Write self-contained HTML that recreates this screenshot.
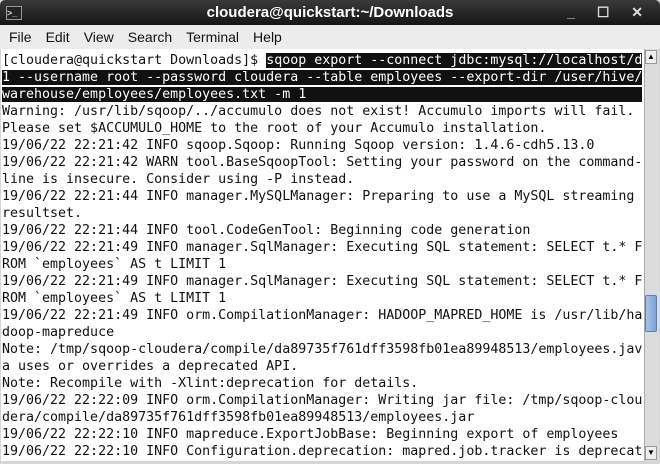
<!DOCTYPE html>
<html><head><style>
body{margin:0;width:660px;height:464px;overflow:hidden;background:#d6d6d6;font-family:"Liberation Sans",sans-serif}
.title{position:absolute;left:0;top:0;width:660px;height:25px;background:linear-gradient(#3a3a3a,#151515);color:#fff;font-weight:bold;font-size:15px;text-align:center;line-height:25px;border-radius:5px 5px 0 0}
.ico{position:absolute;left:6px;top:6px;width:14px;height:12px;border:1px solid #999;background:#222;color:#ccc;font-size:9px;line-height:12px;text-align:left}
.btns{position:absolute;right:8px;top:0;color:#ddd;font-size:14px;letter-spacing:9px}
.menu{position:absolute;left:0;top:25px;width:660px;height:24px;background:#ececec;font-size:14px;line-height:24px;color:#111}
.menu span{margin-left:9px;margin-right:5px}
.term{position:absolute;left:1px;top:49px;width:643px;height:412px;background:#fff;font-family:"DejaVu Sans Mono","Liberation Mono",monospace;font-size:13.3px;line-height:17px;white-space:pre;color:#111;overflow:hidden;padding-left:1px;padding-top:3px;box-sizing:border-box}
.hl{background:#111;color:#fff}
.sb{position:absolute;left:644px;top:49px;width:14px;height:412px;background:#dcdcdc;border-left:1px solid #aaa}
.thumb{position:absolute;left:645px;top:295px;width:12px;height:37px;background:linear-gradient(90deg,#a9c3e6,#7ea2d6);border:1px solid #5b7fb6;border-radius:2px;box-sizing:border-box}
.arr{position:absolute;left:645px;width:12px;height:14px;background:#eee;border:1px solid #999;box-sizing:border-box;font-size:8px;text-align:center;line-height:12px}
</style></head><body>
<div class="title"><div class="ico">&gt;_</div>cloudera@quickstart:~/Downloads<div class="btns">_ ☐ ✕</div></div>
<div class="menu"><span>File</span><span>Edit</span><span>View</span><span>Search</span><span>Terminal</span><span>Help</span></div>
<div class="term">[cloudera@quickstart Downloads]$ <span class="hl">sqoop export --connect jdbc:mysql://localhost/d</span>
<span class="hl">1 --username root --password cloudera --table employees --export-dir /user/hive/</span>
<span class="hl">warehouse/employees/employees.txt -m 1</span><span class="hl">                                          </span>
Warning: /usr/lib/sqoop/../accumulo does not exist! Accumulo imports will fail.
Please set $ACCUMULO_HOME to the root of your Accumulo installation.
19/06/22 22:21:42 INFO sqoop.Sqoop: Running Sqoop version: 1.4.6-cdh5.13.0
19/06/22 22:21:42 WARN tool.BaseSqoopTool: Setting your password on the command-
line is insecure. Consider using -P instead.
19/06/22 22:21:44 INFO manager.MySQLManager: Preparing to use a MySQL streaming
resultset.
19/06/22 22:21:44 INFO tool.CodeGenTool: Beginning code generation
19/06/22 22:21:49 INFO manager.SqlManager: Executing SQL statement: SELECT t.* F
ROM `employees` AS t LIMIT 1
19/06/22 22:21:49 INFO manager.SqlManager: Executing SQL statement: SELECT t.* F
ROM `employees` AS t LIMIT 1
19/06/22 22:21:49 INFO orm.CompilationManager: HADOOP_MAPRED_HOME is /usr/lib/ha
doop-mapreduce
Note: /tmp/sqoop-cloudera/compile/da89735f761dff3598fb01ea89948513/employees.jav
a uses or overrides a deprecated API.
Note: Recompile with -Xlint:deprecation for details.
19/06/22 22:22:09 INFO orm.CompilationManager: Writing jar file: /tmp/sqoop-clou
dera/compile/da89735f761dff3598fb01ea89948513/employees.jar
19/06/22 22:22:10 INFO mapreduce.ExportJobBase: Beginning export of employees
19/06/22 22:22:10 INFO Configuration.deprecation: mapred.job.tracker is deprecat</div>
<div class="sb"></div>
<div class="arr" style="top:50px">▲</div>
<div class="thumb"></div>
<div class="arr" style="top:446px">▼</div>
</body></html>
